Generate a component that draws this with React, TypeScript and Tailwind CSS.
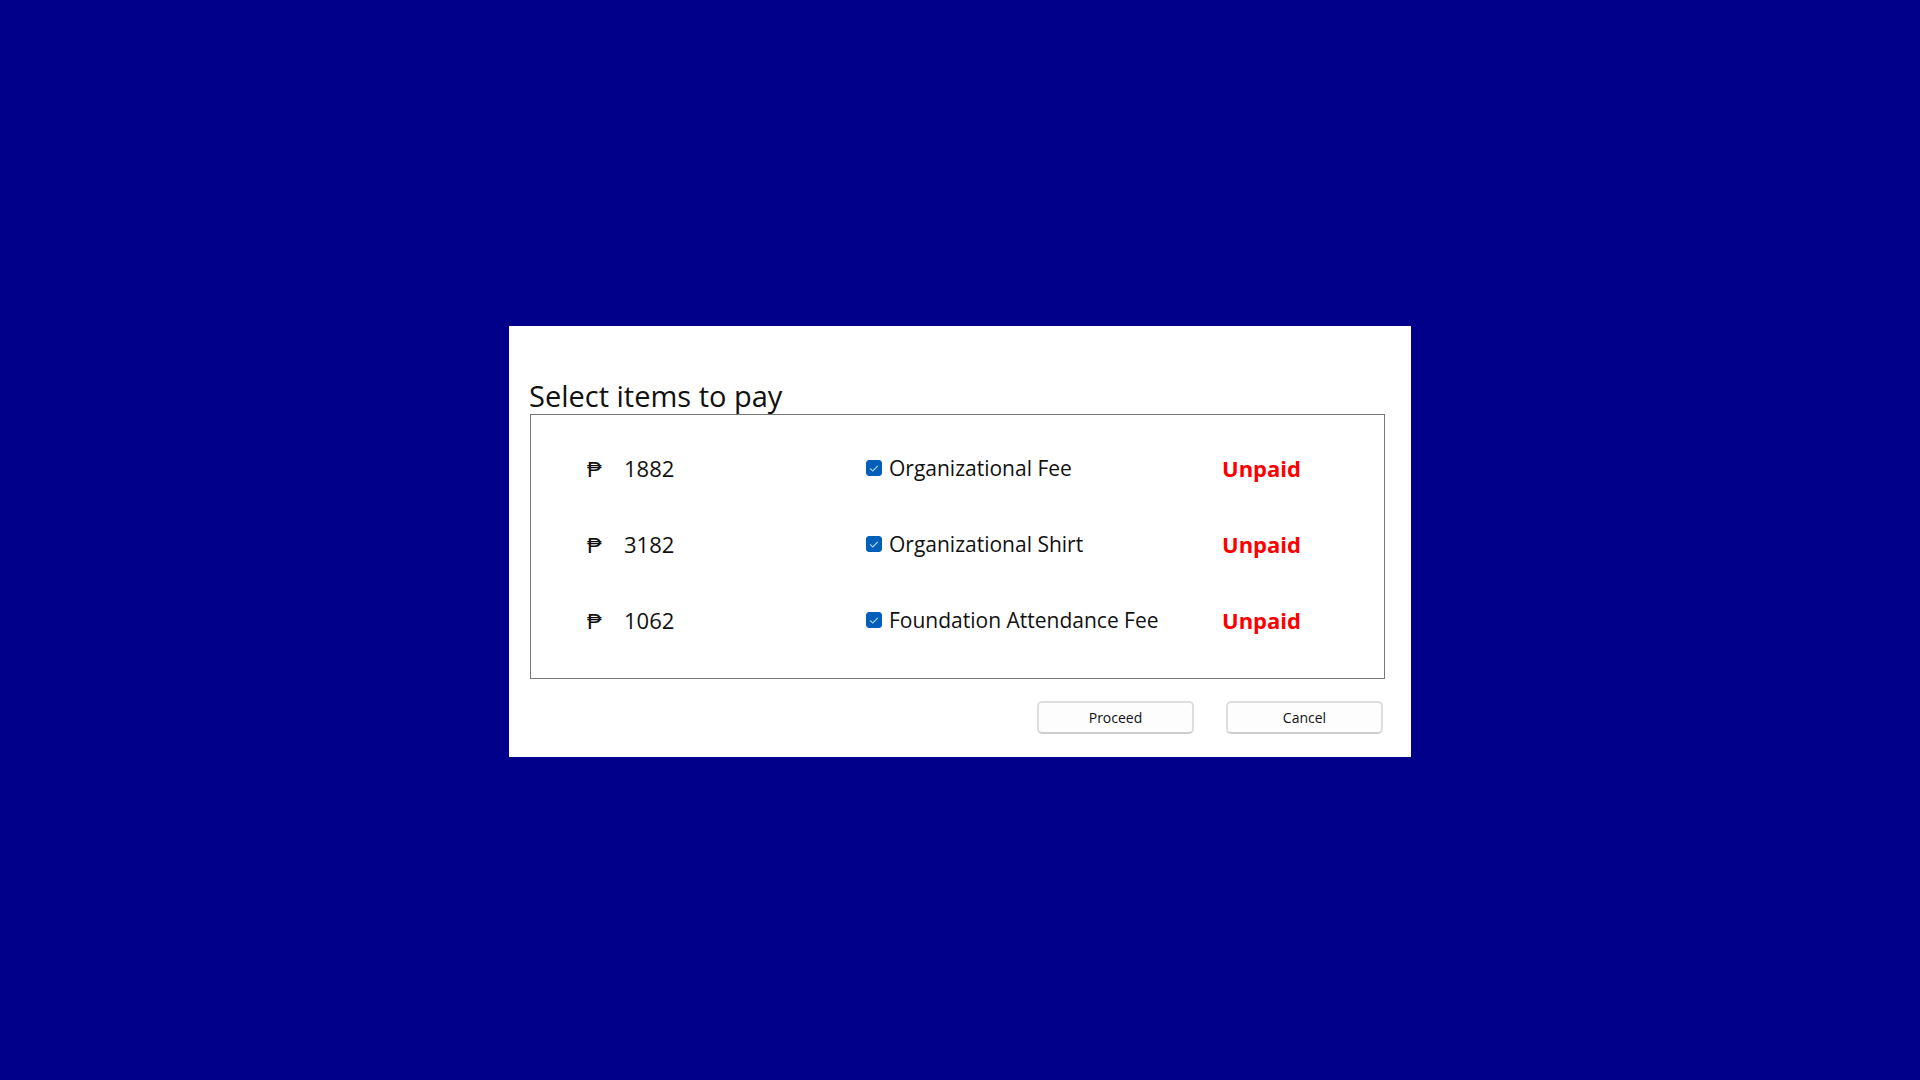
import { useState } from "react";

type Item = { id: string; amount: number; name: string; status: string };

const items: Item[] = [
  { id: "org-fee", amount: 1882, name: "Organizational Fee", status: "Unpaid" },
  { id: "org-shirt", amount: 3182, name: "Organizational Shirt", status: "Unpaid" },
  { id: "foundation-fee", amount: 1062, name: "Foundation Attendance Fee", status: "Unpaid" },
];

function ItemRow({ item }: { item: Item }) {
  const [checked, setChecked] = useState(true);
  return (
    <li className="grid h-[76px] grid-cols-[37px_242px_1fr_106px] items-center text-[22px] leading-8 whitespace-nowrap">
      <span>₱</span>
      <span>{item.amount}</span>
      <div className="flex items-center gap-[7px]">
        <span className="relative size-4 shrink-0">
          <input
            id={item.id}
            type="checkbox"
            checked={checked}
            onChange={(e) => setChecked(e.target.checked)}
            className="peer block size-4 appearance-none rounded-[3px] border border-gray-500 bg-white checked:border-[#005fb8] checked:bg-[#005fb8]"
          />
          <svg
            viewBox="0 0 16 16"
            aria-hidden="true"
            className="pointer-events-none absolute inset-0 hidden size-4 peer-checked:block"
            fill="none"
            stroke="#b5d0ea"
            strokeWidth="1.2"
          >
            <path d="M4 8.4 6.8 11l5-5.2" />
          </svg>
        </span>
        <label htmlFor={item.id} className="text-[21px] leading-8">
          {item.name}
        </label>
      </div>
      <span className="font-bold text-[#ff0000]">{item.status}</span>
    </li>
  );
}

function DialogButton({ label }: { label: string }) {
  return (
    <button
      type="button"
      className="h-[33px] w-[157px] rounded-[5px] border-2 border-[#dedede] border-b-[#cfcfcf] bg-[#fdfdfd] text-sm leading-5"
    >
      {label}
    </button>
  );
}

export default function App() {
  return (
    <main className="flex min-h-screen items-center justify-center bg-[#00008b] pt-[3px] font-['Open_Sans',sans-serif] text-[#111111]">
      <section aria-labelledby="dialog-title" className="w-full max-w-[902px] bg-white pt-[52px] pr-[26px] pb-[23px] pl-5">
        <h1 id="dialog-title" className="text-[29px] leading-9">
          Select items to pay
        </h1>
        <ul className="ml-px border border-[#787878] px-14 pt-[15px] pb-5">
          {items.map((item) => (
            <ItemRow key={item.id} item={item} />
          ))}
        </ul>
        <div className="mt-[22px] flex justify-end gap-8 pr-0.5">
          <DialogButton label="Proceed" />
          <DialogButton label="Cancel" />
        </div>
      </section>
    </main>
  );
}
